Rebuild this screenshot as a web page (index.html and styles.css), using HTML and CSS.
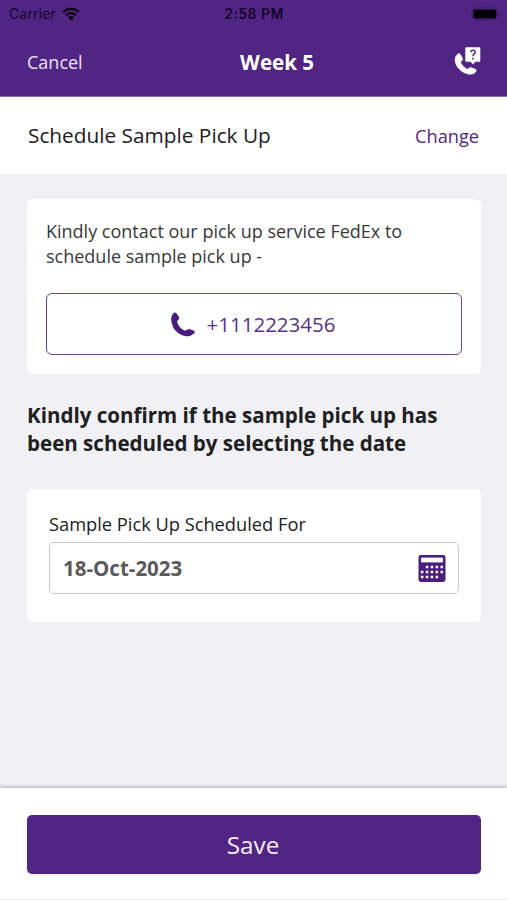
FILE: index.html
```html
<!DOCTYPE html>
<html lang="en">
<head>
<meta charset="utf-8">
<title>Week 5</title>
<link rel="stylesheet" href="styles.css">
</head>
<body>
<header class="top">
  <div class="status">
    <div class="carrier"><span>Carrier</span>
      <svg class="wifi" viewBox="0 0 18 14"><g fill="none" stroke="currentColor" stroke-width="2.4"><path d="M1 4.9Q9-1.6 17 4.9"/><path d="M3.9 8.2Q9 3.8 14.1 8.2"/></g><path d="M5.9 10.1Q9 7.8 12.1 10.1L9 13.7Z" fill="currentColor"/></svg>
    </div>
    <span class="time">2:58 PM</span>
    <svg class="battery" viewBox="0 0 30 14"><rect x=".8" y=".8" width="26" height="12" rx="3.5" fill="none" stroke="#3e1c69" stroke-width="1"/><rect x="2.3" y="2.4" width="23" height="9" rx="2" fill="#05000c"/><path d="M28.2 5v4q1.3-.8 1.3-2t-1.3-2" fill="#3e1c69"/></svg>
  </div>
  <nav class="nav">
    <a class="cancel">Cancel</a>
    <h1 class="title">Week 5</h1>
    <svg class="help" viewBox="0 0 27 29"><path d="M3.2 7.2Q5.2 5.4 6.7 7.5L8.6 11.1Q9.4 12.7 7.9 13.9L6.8 14.9Q8.4 19.2 13.5 21.9L15.1 20.7Q16.3 19.8 17.7 20.5L21.4 22.1Q23.2 23.1 22.1 24.7Q19.7 28.4 14.6 27.4Q7 25.8 2.8 19.5Q-1.6 11.6 3.2 7.2Z" fill="#fff"/><path d="M12.3.2h13q1 0 1 1v12.5q0 1-1 1h-4L19 17.4l-2.3-2.7h-4.4q-1 0-1-1V1.2q0-1 1-1Z" fill="#fff"/><path d="M16.8 5.1Q16.9 3.3 19 3.3T21.2 5.2Q21.2 6.5 19.8 7.3Q19 7.8 19 9.2M19 10.7v1.7" fill="none" stroke="#512584" stroke-width="1.5"/></svg>
  </nav>
</header>
<section class="bar">
  <h2 class="bar-title">Schedule Sample Pick Up</h2>
  <a class="change">Change</a>
</section>
<main class="content">
  <section class="card contact">
    <p class="note">Kindly contact our pick up service FedEx to<br>schedule sample pick up -</p>
    <a class="phone">
      <svg class="phone-icon" viewBox="0 0 24 25"><path d="M2.6.9Q4.3-.3 5.6 1.4L7.9 4.8Q8.7 6.4 7.5 7.7L6 9.2Q7.1 15.2 13.8 18.8L16.5 17.4Q17.7 16.8 19 17.3L22.9 18.8Q24.6 19.7 23 21.6Q19.2 25.2 13.8 24Q7 22.5 2.6 16.3Q-2.4 6.1 2.6.9Z" fill="#4a1d7c"/></svg>
      <span class="number">+1112223456</span>
    </a>
  </section>
  <p class="confirm">Kindly confirm if the sample pick up has<br>been scheduled by selecting the date</p>
  <section class="card date">
    <label class="label">Sample Pick Up Scheduled For</label>
    <div class="field">
      <span class="value">18-Oct-2023</span>
      <svg class="calendar" viewBox="0 0 27 27"><rect width="27" height="27" rx="2.4" fill="#4b1c80"/><path d="M2.6 2.6h21.8v4.8H2.6z" fill="#fff"/><g stroke="#fff" stroke-width="2.5" stroke-dasharray="2.5 2.4"><path d="M7.3 12.1h17.3M2.4 17.1h22.2M2.4 22.1h17.2"/></g></svg>
    </div>
  </section>
</main>
<footer class="footer"><button class="save">Save</button></footer>
</body>
</html>
```
FILE: styles.css
```css
* { box-sizing: border-box; }
body { margin: 0; height: 900px; display: flex; flex-direction: column; overflow: hidden; background: #f1f0f5; font-family: "Open Sans", sans-serif; color: #202022; }
h1, h2, p { margin: 0; }
.top { height: 97px; background: #512584; border-bottom: 1px solid #8c6bb0; }
.status { height: 28px; padding: 0 6px 0 9px; display: grid; grid-template-columns: 1fr auto 1fr; align-items: center; font: 14px/28px Inter, sans-serif; color: #16052b; }
.carrier { display: flex; align-items: center; gap: 6px; }
.carrier span { letter-spacing: .15px; }
.wifi { width: 18px; height: 14px; color: #0c0018; }
.time { font-weight: 600; letter-spacing: .45px; padding-right: 2px; }
.battery { width: 30px; height: 14px; justify-self: end; }
.nav { height: 68px; padding: 0 26px 0 27px; display: grid; grid-template-columns: 1fr auto 1fr; align-items: center; color: #fff; }
.cancel { font-size: 18px; color: #f0e3fb; }
.title { font-size: 20.5px; font-weight: 700; padding: 0 0 1px 46px; }
.help { width: 27px; height: 29px; justify-self: end; position: relative; top: -1px; }
.bar { height: 77px; padding: 0 28px; display: flex; align-items: center; justify-content: space-between; background: #fff; }
.bar-title { font-size: 20.8px; font-weight: 400; padding-bottom: 1px; }
.change { font-size: 18.2px; color: #512584; }
.content { flex: 1; padding: 25px 26px 0 27px; }
.card { background: #fff; border-radius: 6px; }
.contact { height: 175px; padding: 20px 19px; }
.note { font-size: 18px; line-height: 25px; color: #38383a; }
.phone { margin-top: 24px; height: 62px; padding-right: 2px; display: flex; align-items: center; justify-content: center; gap: 12px; border: 1.5px solid #6c4797; border-radius: 6px; color: #5a318a; }
.phone-icon { width: 24px; height: 25px; }
.number { font-size: 20.5px; }
.confirm { margin-top: 27px; font-size: 20.55px; font-weight: 700; line-height: 28px; }
.date { margin-top: 32px; height: 133px; padding: 23px 22px; }
.label { display: block; font-size: 18.25px; line-height: 24px; }
.field { margin-top: 6px; height: 52px; padding: 0 12px 0 13px; display: flex; align-items: center; justify-content: space-between; border: 1.5px solid #c9c9ce; border-radius: 5px; }
.value { font-size: 20.5px; font-weight: 700; color: #5a5a5b; }
.calendar { width: 28px; height: 27px; }
.footer { height: 112px; padding: 27px 26px 0 27px; background: #fff; border-bottom: 1px solid #e6e6e8; box-shadow: 0 -1px 4px rgba(0, 0, 0, .3); }
.save { display: block; width: 100%; height: 59px; padding: 0 2px 0 0; border: 0; border-radius: 5px; background: #512584; color: #f7edff; font: 24.3px "Open Sans", sans-serif; box-shadow: 0 3px 3px #f7f6fa; }
```
